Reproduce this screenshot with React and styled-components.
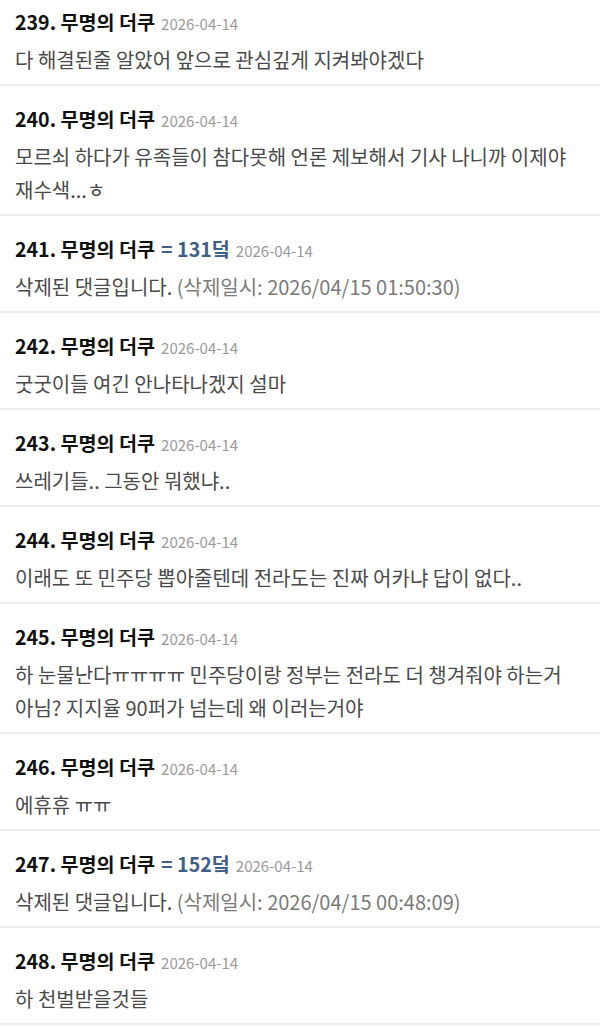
import React from "react";
import styled, { createGlobalStyle } from "styled-components";

const Global = createGlobalStyle`
  html, body { margin: 0; padding: 0; background: #fff; }
  body { font-family: "Noto Sans CJK KR", "Noto Sans", sans-serif; }
`;

const List = styled.ul`
  list-style: none;
  margin: -11px 0 0 0;
  padding: 0;
`;

const Item = styled.li`
  padding: 20px 15px 8px;
  border-bottom: 2px solid #ececec;
`;

const Header = styled.div`
  display: flex;
  align-items: baseline;
  gap: 6px;
  height: 26px;
  line-height: 26px;
  white-space: nowrap;
`;

const Name = styled.span`
  font-size: 19.6px;
  font-weight: 700;
  color: #111;
`;

const Score = styled.span`
  font-size: 19.6px;
  font-weight: 700;
  color: #3f5f86;
`;

const DateText = styled.span`
  font-size: 15px;
  line-height: 1;
  color: #9a9a9a;
`;

const Body = styled.p`
  margin: 8px 0 0;
  font-size: 20px;
  line-height: 33px;
  color: #4a4a4a;
  word-break: keep-all;
`;

const Deleted = styled.span`
  color: #7a7a7a;
`;

const comments = [
  { no: 239, text: "다 해결된줄 알았어 앞으로 관심깊게 지켜봐야겠다" },
  { no: 240, text: "모르쇠 하다가 유족들이 참다못해 언론 제보해서 기사 나니까 이제야 재수색...ㅎ" },
  { no: 241, score: "131덬", deleted: "(삭제일시: 2026/04/15 01:50:30)" },
  { no: 242, text: "굿굿이들 여긴 안나타나겠지 설마" },
  { no: 243, text: "쓰레기들.. 그동안 뭐했냐.." },
  { no: 244, text: "이래도 또 민주당 뽑아줄텐데 전라도는 진짜 어카냐 답이 없다.." },
  { no: 245, text: "하 눈물난다ㅠㅠㅠㅠ 민주당이랑 정부는 전라도 더 챙겨줘야 하는거 아님? 지지율 90퍼가 넘는데 왜 이러는거야" },
  { no: 246, text: "에휴휴 ㅠㅠ" },
  { no: 247, score: "152덬", deleted: "(삭제일시: 2026/04/15 00:48:09)" },
  { no: 248, text: "하 천벌받을것들" },
];

export default function App() {
  return (
    <>
      <Global />
      <List>
        {comments.map((c) => (
          <Item key={c.no}>
            <Header>
              <Name>{c.no}. 무명의 더쿠</Name>
              {c.score && <Score>= {c.score}</Score>}
              <DateText>2026-04-14</DateText>
            </Header>
            <Body>
              {c.deleted ? (
                <>
                  삭제된 댓글입니다. <Deleted>{c.deleted}</Deleted>
                </>
              ) : (
                c.text
              )}
            </Body>
          </Item>
        ))}
      </List>
    </>
  );
}
